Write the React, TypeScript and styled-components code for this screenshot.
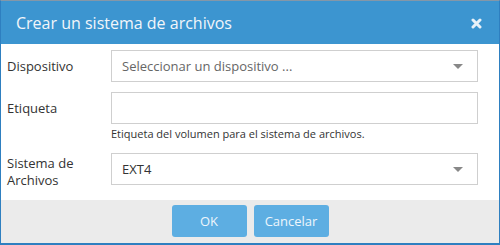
import styled, { createGlobalStyle } from 'styled-components'

const GlobalStyle = createGlobalStyle`
  html, body { margin: 0; padding: 0; background: #ffffff; }
  body { font-family: "Open Sans", "Liberation Sans", sans-serif; }
  * { box-sizing: border-box; }
`

export default function App() {
  return (
    <>
      <GlobalStyle />
      <Dialog>
        <Header>
          <Title>Crear un sistema de archivos</Title>
          <Close aria-label="Cerrar">
            <svg width="11" height="11" viewBox="0 0 11 11">
              <path d="M2 2 L9 9 M9 2 L2 9" stroke="#e8f1f8" strokeWidth="3" strokeLinecap="round" />
            </svg>
          </Close>
        </Header>
        <Body>
          <Row>
            <Label>Dispositivo</Label>
            <Field>
              <Select>
                <SelectText $placeholder>Seleccionar un dispositivo ...</SelectText>
                <Caret />
              </Select>
            </Field>
          </Row>
          <Row>
            <Label>Etiqueta</Label>
            <Field>
              <Input />
              <Help>Etiqueta del volumen para el sistema de archivos.</Help>
            </Field>
          </Row>
          <Row>
            <Label $multiline>Sistema de Archivos</Label>
            <Field>
              <Select>
                <SelectText>EXT4</SelectText>
                <Caret />
              </Select>
            </Field>
          </Row>
        </Body>
        <Footer>
          <Button>OK</Button>
          <Button>Cancelar</Button>
        </Footer>
      </Dialog>
    </>
  )
}

const Dialog = styled.div`
  width: 500px;
  height: 245px;
  display: flex;
  flex-direction: column;
  border: 1px solid #2e7fc0;
  border-top: 1px solid #8497a8;
  border-bottom: 2px solid #2e7fc0;
  background: #ffffff;
`

const Header = styled.div`
  height: 43px;
  background: #3c95d0;
  display: flex;
  align-items: center;
  justify-content: space-between;
  padding: 0 17px 0 15px;
`

const Title = styled.div`
  color: #f2f6fa;
  font-size: 16px;
  line-height: 20px;
`

const Close = styled.div`
  display: flex;
  align-items: center;
  width: 11px;
  height: 11px;
  margin-top: 2px;
`

const Body = styled.div`
  flex: 1;
  display: flex;
  flex-direction: column;
  gap: 10px;
  padding: 6px 21px 0 6px;
`

const Row = styled.div`
  display: grid;
  grid-template-columns: 104px 1fr;
  align-items: start;
`

const Label = styled.div<{ $multiline?: boolean }>`
  font-size: 13px;
  line-height: ${p => (p.$multiline ? '17px' : '18px')};
  color: #333333;
  padding-top: ${p => (p.$multiline ? '2px' : '7px')};
  padding-right: 10px;
`

const Field = styled.div`
  display: flex;
  flex-direction: column;
`

const Select = styled.div`
  height: 32px;
  border: 1px solid #cfcfcf;
  display: flex;
  align-items: center;
  justify-content: space-between;
  padding: 0 14px 0 10px;
`

const SelectText = styled.span<{ $placeholder?: boolean }>`
  font-size: 13px;
  color: ${p => (p.$placeholder ? '#666666' : '#333333')};
`

const Caret = styled.span`
  width: 0;
  height: 0;
  border-left: 5px solid transparent;
  border-right: 5px solid transparent;
  border-top: 5px solid #888888;
`

const Input = styled.div`
  height: 32px;
  border: 1px solid #cfcfcf;
`

const Help = styled.div`
  font-size: 11px;
  line-height: 18px;
  color: #333333;
  margin-top: 1px;
`

const Footer = styled.div`
  height: 43px;
  background: #ebebeb;
  display: flex;
  justify-content: center;
  align-items: center;
  gap: 7px;
  padding-bottom: 1px;
`

const Button = styled.button`
  width: 75px;
  height: 32px;
  border: none;
  border-radius: 3px;
  background: #5daee2;
  color: #eef6fc;
  font-family: "Open Sans", "Liberation Sans", sans-serif;
  font-size: 13px;
  padding: 0;
`
